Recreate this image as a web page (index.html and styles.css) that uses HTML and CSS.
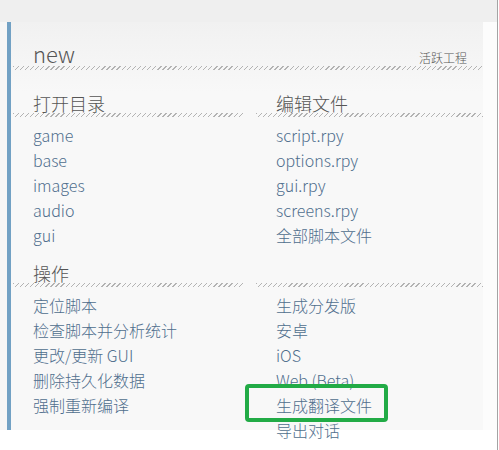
FILE: index.html
```html
<!DOCTYPE html>
<html lang="zh">
<head>
<meta charset="utf-8">
<title>new</title>
<link rel="stylesheet" href="styles.css">
</head>
<body>
<div class="screen">
  <div class="topbar"></div>
  <div class="main">
    <section class="panel">
      <header class="title-row">
        <h1 class="title">new</h1>
        <span class="tag">活跃工程</span>
      </header>
      <div class="hatch"></div>
      <div class="grid">
        <div class="col">
          <h2 class="head">打开目录</h2>
          <div class="hatch"></div>
          <ul class="links">
            <li>game</li>
            <li>base</li>
            <li>images</li>
            <li>audio</li>
            <li>gui</li>
          </ul>
        </div>
        <div class="col">
          <h2 class="head">编辑文件</h2>
          <div class="hatch"></div>
          <ul class="links">
            <li>script.rpy</li>
            <li>options.rpy</li>
            <li>gui.rpy</li>
            <li>screens.rpy</li>
            <li>全部脚本文件</li>
          </ul>
        </div>
        <div class="col">
          <h2 class="head">操作</h2>
          <div class="hatch"></div>
          <ul class="links">
            <li>定位脚本</li>
            <li>检查脚本并分析统计</li>
            <li>更改/更新 GUI</li>
            <li>删除持久化数据</li>
            <li>强制重新编译</li>
          </ul>
        </div>
        <div class="col">
          <h2 class="head">&nbsp;</h2>
          <div class="hatch"></div>
          <ul class="links">
            <li>生成分发版</li>
            <li>安卓</li>
            <li>iOS</li>
            <li>Web (Beta)</li>
            <li class="highlight">生成翻译文件</li>
            <li>导出对话</li>
          </ul>
        </div>
      </div>
    </section>
    <div class="side"></div>
  </div>
</div>
</body>
</html>
```

FILE: styles.css
```css
html, body {
  margin: 0;
  padding: 0;
  background: #ffffff;
}

body {
  font-family: "Noto Sans CJK SC", "Noto Sans", sans-serif;
  font-weight: 300;
  width: 499px;
  height: 450px;
  overflow: hidden;
}

.screen {
  width: 497px;
  height: 450px;
  border-right: 1px solid #a4a4a4;
  display: flex;
  flex-direction: column;
}

.topbar {
  height: 22px;
  flex: none;
  background: #efefef;
}

.main {
  display: flex;
  padding-left: 7px;
  background: linear-gradient(#f6f6f6, #f6f6f6) left top / 7px 408px no-repeat, #ffffff;
}

.panel {
  width: 476px;
  height: 408px;
  box-sizing: border-box;
  border-left: 4px solid #72a1c4;
  background: linear-gradient(#f1f1f1, #f8f8f8 70px);
  padding-top: 18px;
}

.side {
  flex: 1;
  background: #fcfcfc;
  height: 408px;
}

.title-row {
  display: flex;
  align-items: baseline;
  justify-content: space-between;
  padding: 0 16px 0 22px;
}

.title {
  margin: 0;
  font-size: 22px;
  line-height: 26px;
  font-weight: 300;
  color: #555555;
}

.tag {
  font-size: 12px;
  color: #555555;
}

.hatch {
  height: 4px;
  margin-left: 2px;
  background: repeating-linear-gradient(135deg, #b3b3b3 0 1px, transparent 1px 3.6px);
}

.grid {
  display: grid;
  grid-template-columns: 231px 231px;
  column-gap: 12px;
  row-gap: 15px;
  margin-top: 23px;
  padding-left: 2px;
}

.col .hatch {
  margin-left: 0;
}

.head {
  margin: 0;
  padding-left: 20px;
  font-size: 18px;
  line-height: 20px;
  font-weight: 300;
  color: #555555;
}

.links {
  list-style: none;
  margin: 6px 0 0;
  padding: 0 0 0 20px;
}

.links li {
  font-size: 16px;
  line-height: 25px;
  color: #4f6e8d;
  white-space: nowrap;
}

.highlight {
  position: relative;
}

.highlight::after {
  content: "";
  position: absolute;
  left: -31px;
  top: -9px;
  width: 143px;
  height: 38px;
  box-sizing: border-box;
  border: 4px solid #22ab46;
  border-radius: 4px;
}
```
